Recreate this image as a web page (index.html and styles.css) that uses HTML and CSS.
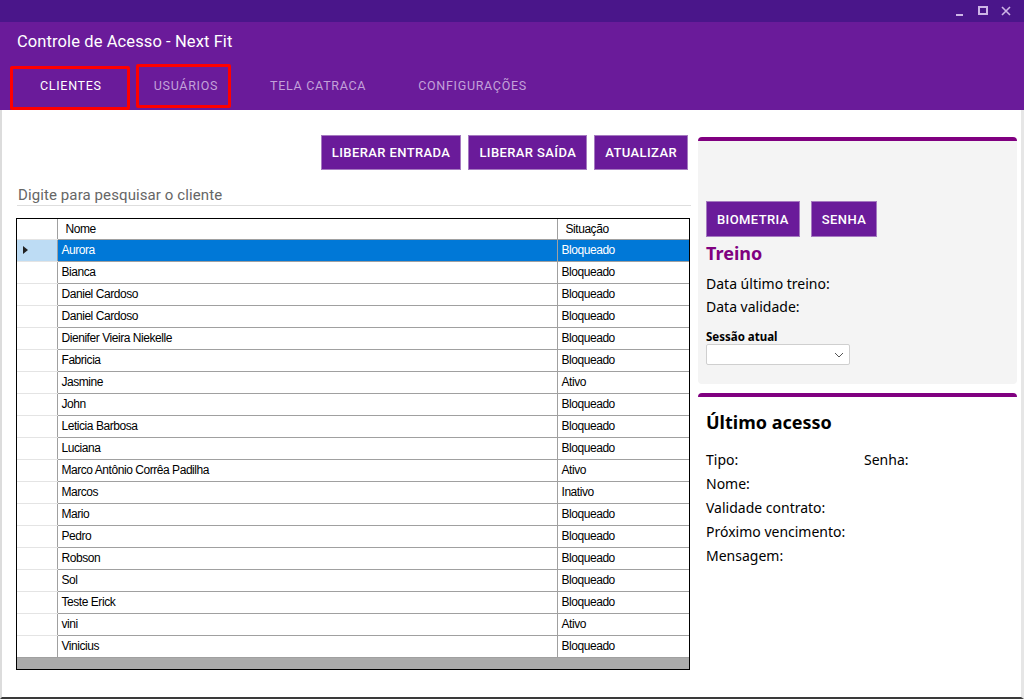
FILE: index.html
```html
<!DOCTYPE html>
<html lang="pt-BR">
<head>
<meta charset="utf-8">
<title>Controle de Acesso - Next Fit</title>
<link rel="stylesheet" href="styles.css">
</head>
<body>
<div class="window">
  <div class="titlebar">
    <span class="ctl ctl-min"></span>
    <span class="ctl ctl-max"></span>
    <span class="ctl ctl-close">
      <svg width="10" height="10" viewBox="0 0 10 10"><path d="M1 1 L9 9 M9 1 L1 9" stroke="#cdb6e6" stroke-width="1.6" fill="none"/></svg>
    </span>
  </div>
  <header class="header">
    <div class="app-title">Controle de Acesso - Next Fit</div>
    <nav class="tabs">
      <span class="tab active">CLIENTES</span>
      <span class="tab">USUÁRIOS</span>
      <span class="tab">TELA CATRACA</span>
      <span class="tab">CONFIGURAÇÕES</span>
    </nav>
    <span class="mark mark-1"></span>
    <span class="mark mark-2"></span>
  </header>
  <main class="content">
    <section class="left">
      <div class="actions">
        <button class="btn">LIBERAR ENTRADA</button>
        <button class="btn">LIBERAR SAÍDA</button>
        <button class="btn">ATUALIZAR</button>
      </div>
      <div class="search">Digite para pesquisar o cliente</div>
      <div class="grid">
        <table>
          <colgroup><col class="c-rh"><col class="c-nome"><col class="c-sit"></colgroup>
          <thead>
            <tr><th class="rh"></th><th>Nome</th><th>Situação</th></tr>
          </thead>
          <tbody>
            <tr class="sel"><td class="rh"><span class="tri"></span></td><td>Aurora</td><td>Bloqueado</td></tr>
            <tr><td class="rh"></td><td>Bianca</td><td>Bloqueado</td></tr>
            <tr><td class="rh"></td><td>Daniel Cardoso</td><td>Bloqueado</td></tr>
            <tr><td class="rh"></td><td>Daniel Cardoso</td><td>Bloqueado</td></tr>
            <tr><td class="rh"></td><td>Dienifer Vieira Niekelle</td><td>Bloqueado</td></tr>
            <tr><td class="rh"></td><td>Fabricia</td><td>Bloqueado</td></tr>
            <tr><td class="rh"></td><td>Jasmine</td><td>Ativo</td></tr>
            <tr><td class="rh"></td><td>John</td><td>Bloqueado</td></tr>
            <tr><td class="rh"></td><td>Leticia Barbosa</td><td>Bloqueado</td></tr>
            <tr><td class="rh"></td><td>Luciana</td><td>Bloqueado</td></tr>
            <tr><td class="rh"></td><td>Marco Antônio Corrêa Padilha</td><td>Ativo</td></tr>
            <tr><td class="rh"></td><td>Marcos</td><td>Inativo</td></tr>
            <tr><td class="rh"></td><td>Mario</td><td>Bloqueado</td></tr>
            <tr><td class="rh"></td><td>Pedro</td><td>Bloqueado</td></tr>
            <tr><td class="rh"></td><td>Robson</td><td>Bloqueado</td></tr>
            <tr><td class="rh"></td><td>Sol</td><td>Bloqueado</td></tr>
            <tr><td class="rh"></td><td>Teste Erick</td><td>Bloqueado</td></tr>
            <tr><td class="rh"></td><td>vini</td><td>Ativo</td></tr>
            <tr><td class="rh"></td><td>Vinicius</td><td>Bloqueado</td></tr>
          </tbody>
        </table>
        <div class="grid-fill"></div>
      </div>
    </section>
    <aside class="right">
      <div class="card card-treino">
        <div class="auth">
          <button class="btn">BIOMETRIA</button>
          <button class="btn">SENHA</button>
        </div>
        <h2 class="treino-title">Treino</h2>
        <div class="line first">Data último treino:</div>
        <div class="line">Data validade:</div>
        <div class="sess-label">Sessão atual</div>
        <div class="select">
          <svg width="10" height="6" viewBox="0 0 10 6"><path d="M1 1 L5 5 L9 1" stroke="#555" stroke-width="1" fill="none"/></svg>
        </div>
      </div>
      <div class="card card-acesso">
        <h2 class="acesso-title">Último acesso</h2>
        <div class="fields">
          <div class="f">Tipo:</div><div class="f">Senha:</div>
          <div class="f wide">Nome:</div>
          <div class="f wide">Validade contrato:</div>
          <div class="f wide">Próximo vencimento:</div>
          <div class="f wide">Mensagem:</div>
        </div>
      </div>
    </aside>
  </main>
</div>
</body>
</html>
```
FILE: styles.css
```css
* { box-sizing: border-box; }
html, body { margin: 0; padding: 0; }
body { width: 1024px; height: 699px; overflow: hidden; background: #fff; font-family: Roboto, "Liberation Sans", sans-serif; }

.window { width: 1024px; height: 699px; display: flex; flex-direction: column; }

.titlebar { height: 22px; background: #4a168a; display: flex; justify-content: flex-end; align-items: center; padding-right: 12px; gap: 11px; }
.ctl { display: block; width: 12px; height: 12px; position: relative; }
.ctl-min::after { content: ""; position: absolute; left: 2px; bottom: 1px; width: 7px; height: 2px; background: #cdb6e6; }
.ctl-max::after { content: ""; position: absolute; left: 1px; top: 1px; width: 10px; height: 9px; border: 2px solid #cdb6e6; box-sizing: border-box; }
.ctl-close svg { display: block; margin: 1px 0 0 1px; }

.header { position: relative; height: 88px; background: #6a1b9a; display: flex; flex-direction: column; }
.app-title { color: #fff; font-size: 16.5px; font-weight: 400; padding: 10px 0 0 17px; height: 40px; line-height: 19px; letter-spacing: 0.1px; }
.tabs { display: flex; padding-left: 14px; height: 48px; align-items: center; }
.tab { padding: 0 26px; font-size: 12.5px; font-weight: 400; letter-spacing: 0.7px; color: #c3a1d9; line-height: 48px; }
.tab.active { color: #fff; }
.mark { position: absolute; border: 3px solid #ff0000; border-radius: 2px; }
.mark-1 { left: 10px; top: 44px; width: 120px; height: 44px; }
.mark-2 { left: 136px; top: 42px; width: 95px; height: 44px; }

.content { flex: 1; display: flex; gap: 7px; border-left: 2px solid #dcdcdc; border-right: 3px solid #e6e6e6; border-bottom: 2px solid #3a3a3a; padding: 0 4px 0 14px; }

.left { width: 675px; padding-top: 25px; display: flex; flex-direction: column; }
.actions { display: flex; justify-content: flex-end; gap: 7px; padding-right: 3px; }
.btn { height: 35px; background: #6a1b9a; border: 1px solid #a57ac0; color: #fff; font-family: Roboto, "Liberation Sans", sans-serif; font-size: 13px; font-weight: 500; letter-spacing: 0.4px; padding: 0 10px; cursor: pointer; }
.search { margin: 15px 0 0 1px; height: 21px; line-height: 20px; font-size: 15px; color: #666; border-bottom: 1px solid #dedede; padding-left: 1px; letter-spacing: 0.1px; }

.grid { margin-top: 12px; width: 674px; border: 1px solid #000; background: #ababab; }
.grid table { width: 672px; border-collapse: collapse; table-layout: fixed; background: #fff; font-family: "Liberation Sans", Arial, sans-serif; font-size: 12px; letter-spacing: -0.45px; color: #000; }
.c-rh { width: 40px; }
.c-nome { width: 500px; }
.c-sit { width: 132px; }
.grid th { height: 20px; font-weight: normal; text-align: left; padding: 0 0 0 8px; border-right: 1px solid #a0a0a0; border-bottom: 1px solid #a0a0a0; background: #fff; }
.grid th:last-child { border-right: none; }
.grid td { height: 22px; padding: 0 0 0 4px; border-right: 1px solid #a0a0a0; border-bottom: 1px solid #a0a0a0; white-space: nowrap; color: #000; }
.grid td:last-child { border-right: none; }
.grid td.rh, .grid th.rh { border-bottom: 1px solid #e4e4e4; border-right: 1px solid #a0a0a0; padding: 0; }
.grid tbody tr:last-child td.rh { border-bottom: 1px solid #a0a0a0; }
.grid tr.sel td { background: #0078d7; color: #fff; }
.grid tr.sel td.rh { background: #bddcf4; }
.tri { display: block; margin-left: 6px; width: 0; height: 0; border-top: 4.5px solid transparent; border-bottom: 4.5px solid transparent; border-left: 5px solid #222; }
.grid-fill { height: 11px; background: #ababab; }

.right { width: 319px; padding-top: 27px; display: flex; flex-direction: column; gap: 9px; font-family: "Noto Sans", "Open Sans", sans-serif; }
.card { border-top: 4px solid #800080; border-radius: 4px 4px 0 0; }
.card-treino { background: #f4f4f4; height: 247px; padding: 60px 8px 0 8px; border-radius: 4px 4px 4px 4px; }
.auth { display: flex; gap: 11px; }
.auth .btn { height: 36px; padding: 0 10px; letter-spacing: 0.4px; }
.treino-title { margin: 3px 0 0; font-size: 18px; font-weight: 700; color: #800080; line-height: 26px; }
.line { font-size: 14px; line-height: 23px; color: #000; }
.line.first { margin-top: 6px; }
.sess-label { margin-top: 11px; font-size: 11.5px; font-weight: 700; line-height: 15px; color: #000; }
.select { margin-top: 0; width: 144px; height: 21px; background: #fff; border: 1px solid #cfcfcf; border-radius: 2px; display: flex; justify-content: flex-end; align-items: center; padding-right: 5px; }
.select svg { display: block; }

.card-acesso { background: #fff; padding: 12px 8px 0 8px; flex: 1; }
.acesso-title { margin: 0; font-size: 18px; font-weight: 700; color: #000; line-height: 26px; }
.fields { margin-top: 13px; display: grid; grid-template-columns: 158px 1fr; row-gap: 0; }
.f { font-size: 14px; line-height: 24px; color: #000; }
.f.wide { grid-column: 1 / 3; }
```
